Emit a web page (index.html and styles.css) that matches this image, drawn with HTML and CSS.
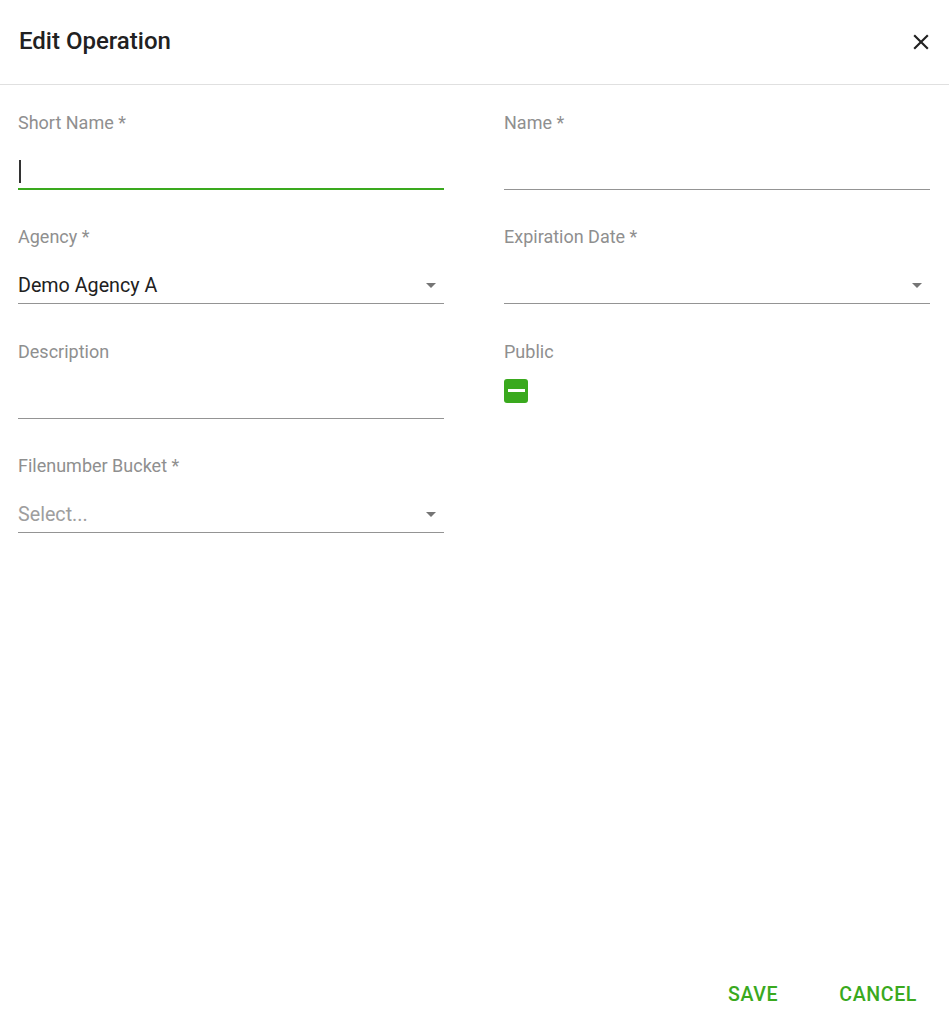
FILE: index.html
```html
<!DOCTYPE html>
<html lang="en">
<head>
<meta charset="utf-8">
<title>Edit Operation</title>
<link rel="stylesheet" href="styles.css">
</head>
<body>
<div class="dialog">
  <header class="dialog-header">
    <h1 class="dialog-title">Edit Operation</h1>
    <button class="close-btn" aria-label="Close">
      <svg viewBox="0 0 24 24" width="26" height="26"><path d="M19 6.41L17.59 5 12 10.59 6.41 5 5 6.41 10.59 12 5 17.59 6.41 19 12 13.41 17.59 19 19 17.59 13.41 12z" fill="#212121"/></svg>
    </button>
  </header>
  <main class="dialog-body">
    <div class="field">
      <label class="field-label">Short Name *</label>
      <div class="field-input focused"><span class="caret"></span></div>
    </div>
    <div class="field">
      <label class="field-label">Name *</label>
      <div class="field-input"></div>
    </div>
    <div class="field">
      <label class="field-label">Agency *</label>
      <div class="field-input select"><span class="value">Demo Agency A</span><span class="arrow"></span></div>
    </div>
    <div class="field">
      <label class="field-label">Expiration Date *</label>
      <div class="field-input select"><span class="value"></span><span class="arrow"></span></div>
    </div>
    <div class="field">
      <label class="field-label">Description</label>
      <div class="field-input"></div>
    </div>
    <div class="field">
      <label class="field-label">Public</label>
      <div class="checkbox"><span class="checkbox-bar"></span></div>
    </div>
    <div class="field">
      <label class="field-label">Filenumber Bucket *</label>
      <div class="field-input select"><span class="value placeholder">Select...</span><span class="arrow"></span></div>
    </div>
  </main>
  <footer class="dialog-footer">
    <button class="text-btn">SAVE</button>
    <button class="text-btn">CANCEL</button>
  </footer>
</div>
</body>
</html>
```
FILE: styles.css
```css
html, body {
  margin: 0;
  padding: 0;
  background: #ffffff;
}
body {
  font-family: Roboto, "Liberation Sans", Arial, sans-serif;
  color: #212121;
}
.dialog {
  display: flex;
  flex-direction: column;
  height: 100vh;
  box-sizing: border-box;
}
.dialog-header {
  height: 85px;
  box-sizing: border-box;
  display: flex;
  align-items: center;
  justify-content: space-between;
  padding: 0 15px 2px 19px;
  border-bottom: 1px solid #e0e0e0;
  flex-shrink: 0;
}
.dialog-title {
  margin: 0;
  font-size: 24px;
  font-weight: 500;
  line-height: 28px;
  color: #212121;
}
.close-btn {
  border: 0;
  background: none;
  padding: 0;
  width: 26px;
  height: 26px;
  display: flex;
  cursor: pointer;
  margin-top: 2px;
}
.dialog-body {
  flex: 1;
  display: grid;
  grid-template-columns: 426px 426px;
  column-gap: 60px;
  row-gap: 36.4px;
  align-content: start;
  padding: 27px 19px 0 18px;
}
.field {
  display: flex;
  flex-direction: column;
}
.field-label {
  font-size: 18px;
  line-height: 21px;
  height: 21px;
  color: #8f8f8f;
}
.field-input {
  margin-top: 27px;
  height: 23px;
  padding-bottom: 6px;
  border-bottom: 1px solid #949494;
  display: flex;
  align-items: center;
  font-size: 19.7px;
  line-height: 23px;
}
.field-input.focused {
  border-bottom: 2px solid #3aa91e;
  padding-bottom: 5px;
}
.caret {
  display: block;
  width: 2px;
  height: 23px;
  margin-left: 1px;
  background: #333333;
}
.value {
  flex: 1;
  color: #212121;
}
.value.placeholder {
  color: #9e9e9e;
}
.arrow {
  width: 0;
  height: 0;
  border-left: 5px solid transparent;
  border-right: 5px solid transparent;
  border-top: 5px solid #757575;
  margin-right: 8px;
  margin-top: -1px;
}
.checkbox {
  margin-top: 17px;
  width: 24px;
  height: 24px;
  border-radius: 3px;
  background: #3aa91e;
  display: flex;
  align-items: center;
  justify-content: center;
}
.checkbox-bar {
  width: 17px;
  height: 3px;
  background: #ffffff;
}
.dialog-footer {
  display: flex;
  justify-content: flex-end;
  gap: 61px;
  padding: 0 32px 25px 0;
  flex-shrink: 0;
}
.text-btn {
  border: 0;
  background: none;
  padding: 0;
  font-family: Roboto, "Liberation Sans", Arial, sans-serif;
  font-size: 19.6px;
  font-weight: 500;
  line-height: 22px;
  letter-spacing: 0.6px;
  color: #3aa91e;
  cursor: pointer;
}
```
